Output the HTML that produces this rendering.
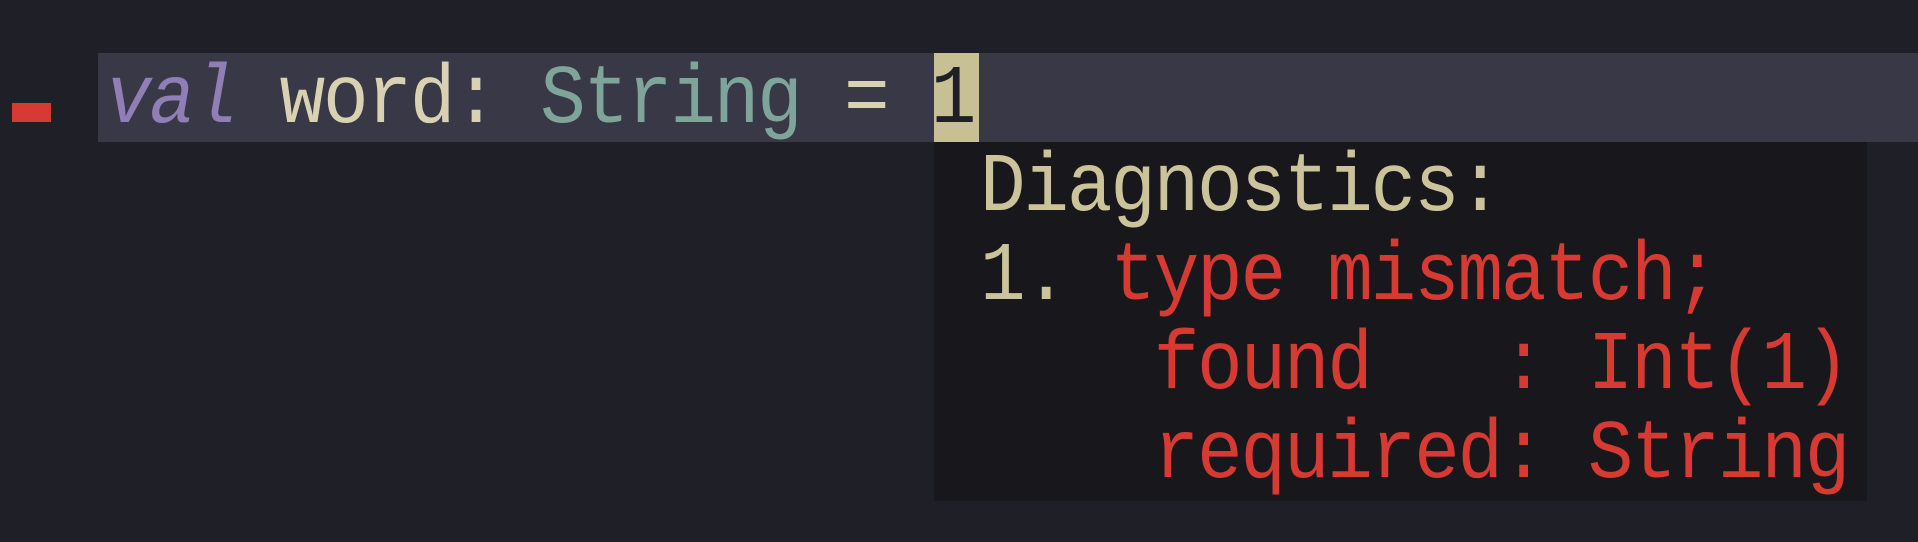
<!DOCTYPE html>
<html><head><style>
body{margin:0;width:1918px;height:542px;background:#1f1f28;position:relative;overflow:hidden;font-family:"Liberation Mono",monospace;font-size:76px;letter-spacing:-2.2px;}
.t{position:absolute;white-space:pre;line-height:1;transform:scaleY(1.1);transform-origin:left top;}
</style></head><body>
<div style="position:absolute;left:98px;top:53px;width:1820px;height:89px;background:#383846"></div>
<div style="position:absolute;left:12px;top:103px;width:39px;height:19px;background:#d63a32"></div>
<div style="position:absolute;left:934px;top:53px;width:45px;height:89px;background:#c8c095"></div>
<div style="position:absolute;left:934px;top:139px;width:45px;height:2px;background:#c8c095"></div>
<div style="position:absolute;left:934px;top:142px;width:933px;height:359px;background:#17171c"></div>
<div class="t" style="left:106px;top:58px;color:#d8d2b2"><span style="color:#8f7fb6;font-style:italic">val</span> word: <span style="color:#7fa59b">String</span> = <span style="color:#1f1f28">1</span></div>
<div class="t" style="left:980px;top:146px;color:#cbc39a">Diagnostics:</div>
<div class="t" style="left:980px;top:235px;color:#cbc39a">1. <span style="color:#d63a32">type mismatch;</span></div>
<div class="t" style="left:980px;top:324px;color:#d63a32">    found   : Int(1)</div>
<div class="t" style="left:980px;top:413px;color:#d63a32">    required: String</div>
</body></html>
